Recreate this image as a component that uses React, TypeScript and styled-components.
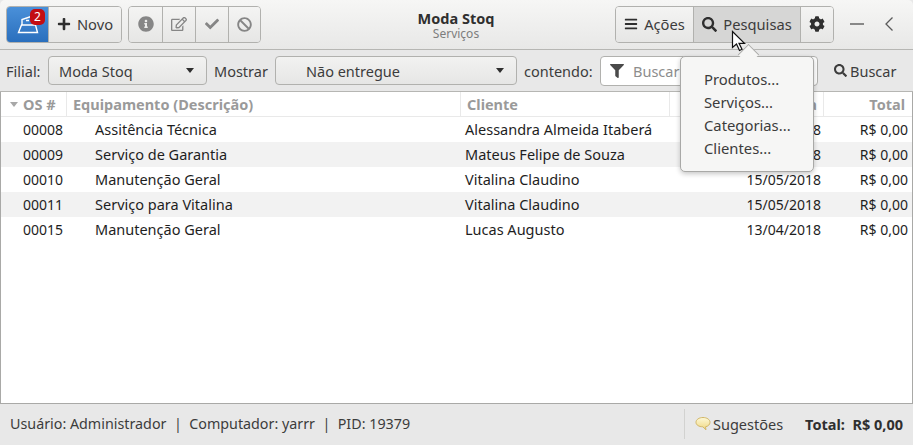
import styled, { createGlobalStyle } from "styled-components";
import { FaBan, FaBars, FaCheck, FaCog, FaFilter, FaInfoCircle, FaPlus, FaRegEdit, FaSearch } from "react-icons/fa";

const rows = [
  { id: "00008", item: "Assitência Técnica", client: "Alessandra Almeida Itaberá", date: "15/05/2018" },
  { id: "00009", item: "Serviço de Garantia", client: "Mateus Felipe de Souza", date: "15/05/2018" },
  { id: "00010", item: "Manutenção Geral", client: "Vitalina Claudino", date: "15/05/2018" },
  { id: "00011", item: "Serviço para Vitalina", client: "Vitalina Claudino", date: "15/05/2018" },
  { id: "00015", item: "Manutenção Geral", client: "Lucas Augusto", date: "13/04/2018" },
];

const Global = createGlobalStyle`
  html, body { margin: 0; padding: 0; background: #e8e8e8; }
  * { box-sizing: border-box; }
`;

const Window = styled.div`
  position: relative;
  width: 913px;
  height: 445px;
  overflow: hidden;
  display: flex;
  flex-direction: column;
  background: #e8e8e8;
  color: #3c3c3c;
  font-family: "Noto Sans", sans-serif;
  font-size: 14.5px;
`;

const HeaderBar = styled.header`
  height: 50px;
  flex: none;
  display: flex;
  align-items: center;
  padding: 0 20px 1px 6px;
  background: linear-gradient(#f6f6f5, #e8e8e7);
  border-bottom: 1px solid #b6b6b3;
  border-radius: 5px 5px 0 0;
`;

const Group = styled.div<{ $ml?: number }>`
  display: flex;
  height: 37px;
  margin-left: ${(p) => p.$ml ?? 0}px;
  border: 1px solid #b1b1ae;
  border-radius: 4px;
  overflow: hidden;
`;

const ToolButton = styled.div<{ $w: number; $active?: boolean; $gap?: number }>`
  width: ${(p) => p.$w}px;
  display: flex;
  align-items: center;
  justify-content: center;
  gap: ${(p) => p.$gap ?? 5}px;
  background: ${(p) => (p.$active ? "#d6d6d5" : "linear-gradient(#f4f4f3, #e6e6e5)")};
  border-left: 1px solid #b1b1ae;
  color: #3c3c3c;
  font-size: 14.7px;
  &:first-child { border-left: none; }
  svg { flex: none; }
`;

const BlueButton = styled.div`
  position: relative;
  width: 41px;
  background: linear-gradient(#4a90d9, #2a6fbd);
  svg { position: absolute; left: 10px; top: 8px; }
`;

const Badge = styled.span`
  position: absolute;
  top: 2px;
  left: 23px;
  width: 15px;
  height: 16px;
  border-radius: 5px;
  background: #c30d12;
  color: #fff;
  font-size: 12px;
  line-height: 16px;
  text-align: center;
`;

const Title = styled.div`
  flex: 1;
  text-align: center;
  line-height: 15px;
  padding: 4px 0 0 36px;
  strong { display: block; font-size: 14.5px; color: #2f2f2f; font-weight: 700; }
  span { display: block; font-size: 12px; color: #7d7d7d; }
`;

const WindowButtons = styled.div`
  display: flex;
  align-items: center;
  margin-left: 16px;
  gap: 21px;
`;

const FilterBar = styled.div`
  height: 42px;
  flex: none;
  display: flex;
  align-items: center;
  padding: 0 0 0 6px;
  background: #e8e8e8;
  border-bottom: 1px solid #b6b6b3;
`;

const Label = styled.span<{ $w: number }>`
  width: ${(p) => p.$w}px;
  flex: none;
`;

const Combo = styled.div<{ $w: number }>`
  width: ${(p) => p.$w}px;
  height: 29px;
  flex: none;
  display: flex;
  align-items: center;
  justify-content: space-between;
  padding: 0 12px 0 10px;
  border: 1px solid #b1b1ae;
  border-radius: 4px;
  background: linear-gradient(#f2f2f1, #e6e6e5);
  margin-right: 7px;
  &::after {
    content: "";
    border: 4px solid transparent;
    border-top: 5px solid #2f2f2f;
    border-bottom: none;
  }
`;

const ComboText = styled.span<{ $pl?: number }>`
  padding-left: ${(p) => p.$pl ?? 0}px;
`;

const Entry = styled.div`
  width: 218px;
  height: 30px;
  flex: none;
  display: flex;
  align-items: center;
  gap: 9px;
  padding-left: 9px;
  background: #fff;
  border: 1px solid #b1b1ae;
  border-radius: 4px;
  color: #8d8d8d;
  svg { color: #4a4a4a; }
`;

const SearchButton = styled.div`
  margin-left: 16px;
  display: flex;
  align-items: center;
  gap: 3px;
`;

const Table = styled.div`
  flex: 1;
  background: #fff;
  border: 1px solid #a9a9a7;
  border-top: none;
`;

const cols = "66px 394px 209px 154px 87px";

const HeadRow = styled.div`
  display: grid;
  grid-template-columns: ${cols};
  height: 25px;
  border-bottom: 1px solid #e9e9e9;
`;

const HeadCell = styled.div<{ $right?: boolean }>`
  display: flex;
  align-items: center;
  justify-content: ${(p) => (p.$right ? "flex-end" : "flex-start")};
  padding: 0 6px;
  border-right: 1px solid #e9e9e9;
  color: #9a9a9a;
  font-weight: 700;
  &:last-child { border-right: none; }
`;

const SortArrow = styled.i`
  border: 4px solid transparent;
  border-top: 5px solid #a8a8a8;
  border-bottom: none;
  margin: 1px 5px 0 3px;
`;

const Row = styled.div<{ $odd: boolean }>`
  display: grid;
  grid-template-columns: ${cols};
  height: 25px;
  padding-bottom: 2px;
  align-items: center;
  background: ${(p) => (p.$odd ? "#f2f2f2" : "#fff")};
  color: #1e1e1e;
`;

const Cell = styled.div<{ $pl?: number; $right?: boolean }>`
  white-space: nowrap;
  padding-left: ${(p) => p.$pl ?? 4}px;
  padding-right: ${(p) => (p.$right ? 3 : 0)}px;
  text-align: ${(p) => (p.$right ? "right" : "left")};
`;

const Amount = styled.span`
  font-size: 14px;
`;

const StatusBar = styled.footer`
  height: 41px;
  flex: none;
  display: flex;
  align-items: center;
  padding: 0 10px 2px;
  background: #e8e8e8;
`;

const StatusInfo = styled.div`
  flex: 1;
  white-space: pre;
  font-size: 14.3px;
`;

const Suggest = styled.div`
  height: 30px;
  width: 109px;
  display: flex;
  align-items: center;
  gap: 2px;
  padding-left: 10px;
  border-left: 1px solid #d2d2d0;
`;

const Total = styled.div`
  width: 110px;
  text-align: right;
  font-weight: 700;
  white-space: pre;
  color: #2f2f2f;
`;

const Popover = styled.div`
  position: absolute;
  left: 680px;
  top: 56px;
  width: 134px;
  height: 116px;
  padding: 11px 0 0 23px;
  background: #f6f6f5;
  border: 1px solid #a9a9a7;
  border-radius: 5px;
  box-shadow: 0 2px 5px rgba(0, 0, 0, 0.22);
  font-size: 14.8px;
  line-height: 23px;
  &::before {
    content: "";
    position: absolute;
    left: 60px;
    top: -10px;
    width: 14px;
    height: 14px;
    background: #f6f6f5;
    border-left: 1px solid #a9a9a7;
    border-top: 1px solid #a9a9a7;
    transform: rotate(45deg);
  }
`;

const MenuItem = styled.div`
  position: relative;
`;

const Pointer = styled.svg`
  position: absolute;
  left: 731px;
  top: 30px;
`;

export default function App() {
  return (
    <Window>
      <Global />
      <HeaderBar>
        <Group>
          <BlueButton>
            <svg width="23" height="20" viewBox="0 0 23 20" fill="none" stroke="#fff" strokeWidth="1.4">
              <path d="M5 10V4.500L14 1.500H17V10" />
              <path d="M4.500 10H18.500L20.500 17.500H1.500Z" />
              <path d="M9 5.500h3" strokeWidth="1.600" />
            </svg>
            <Badge>2</Badge>
          </BlueButton>
          <ToolButton $w={73} $gap={6}>
            <FaPlus size={14} color="#2f2f2f" />
            Novo
          </ToolButton>
        </Group>
        <Group $ml={6}>
          <ToolButton $w={33}><FaInfoCircle size={16} color="#868686" /></ToolButton>
          <ToolButton $w={33}><FaRegEdit size={16} color="#868686" /></ToolButton>
          <ToolButton $w={33}><FaCheck size={14} color="#868686" /></ToolButton>
          <ToolButton $w={32}><FaBan size={15} color="#868686" /></ToolButton>
        </Group>
        <Title>
          <strong>Moda Stoq</strong>
          <span>Serviços</span>
        </Title>
        <Group>
          <ToolButton $w={77} $gap={6}><FaBars size={14} color="#2f2f2f" />Ações</ToolButton>
          <ToolButton $w={107} $active $gap={6}><FaSearch size={15} color="#2f2f2f" />Pesquisas</ToolButton>
          <ToolButton $w={33}><FaCog size={16} color="#2f2f2f" /></ToolButton>
        </Group>
        <WindowButtons>
          <svg width="14" height="2" viewBox="0 0 14 2"><path d="M0 1h14" stroke="#6e6e6e" strokeWidth="1.6" /></svg>
          <svg width="8" height="14" viewBox="0 0 8 14" fill="none"><path d="M7.500 .5 1 7l6.500 6.500" stroke="#5a5a5a" strokeWidth="1.300" /></svg>
        </WindowButtons>
      </HeaderBar>

      <FilterBar>
        <Label $w={42}>Filial:</Label>
        <Combo $w={159}>Moda Stoq</Combo>
        <Label $w={61}>Mostrar</Label>
        <Combo $w={242}><ComboText $pl={20}>Não entregue</ComboText></Combo>
        <Label $w={76}>contendo:</Label>
        <Entry><FaFilter size={14} />Buscar</Entry>
        <SearchButton><FaSearch size={13} color="#3c3c3c" />Buscar</SearchButton>
      </FilterBar>

      <Table>
        <HeadRow>
          <HeadCell><SortArrow />OS #</HeadCell>
          <HeadCell>Equipamento (Descrição)</HeadCell>
          <HeadCell>Cliente</HeadCell>
          <HeadCell $right>Entrega</HeadCell>
          <HeadCell $right>Total</HeadCell>
        </HeadRow>
        {rows.map((row, i) => (
          <Row key={row.id} $odd={i % 2 === 1}>
            <Cell $pl={22}><Amount>{row.id}</Amount></Cell>
            <Cell $pl={28}>{row.item}</Cell>
            <Cell>{row.client}</Cell>
            <Cell $right><Amount>{row.date}</Amount></Cell>
            <Cell $right><Amount>R$ 0,00</Amount></Cell>
          </Row>
        ))}
      </Table>

      <StatusBar>
        <StatusInfo>{"Usuário: Administrador  |  Computador: yarrr  |  PID: 19379"}</StatusInfo>
        <Suggest>
          <svg width="16" height="16" viewBox="0 0 16 16">
            <defs>
              <linearGradient id="bubble" x1="0" y1="0" x2="0" y2="1">
                <stop offset="0" stopColor="#fdf8d8" />
                <stop offset="1" stopColor="#f0d880" />
              </linearGradient>
            </defs>
            <path d="M8 1.500c3.800 0 7 2 7 4.800 0 2.300-2 4-4.500 4.500l.5 3-3.200-3C4 10.800 1 9 1 6.300 1 3.500 4.200 1.500 8 1.500z" fill="url(#bubble)" stroke="#d2b768" />
          </svg>
          Sugestões
        </Suggest>
        <Total>{"Total:  R$ 0,00"}</Total>
      </StatusBar>

      <Popover>
        <MenuItem>Produtos...</MenuItem>
        <MenuItem>Serviços...</MenuItem>
        <MenuItem>Categorias...</MenuItem>
        <MenuItem>Clientes...</MenuItem>
      </Popover>
      <Pointer width="15" height="22" viewBox="0 0 15 22">
        <path d="M1.500 1.500v16l4-3.500 3 6.500 2.500-1.200-3-6h5.500z" fill="#fff" stroke="#111" strokeWidth="1.200" />
      </Pointer>
    </Window>
  );
}
